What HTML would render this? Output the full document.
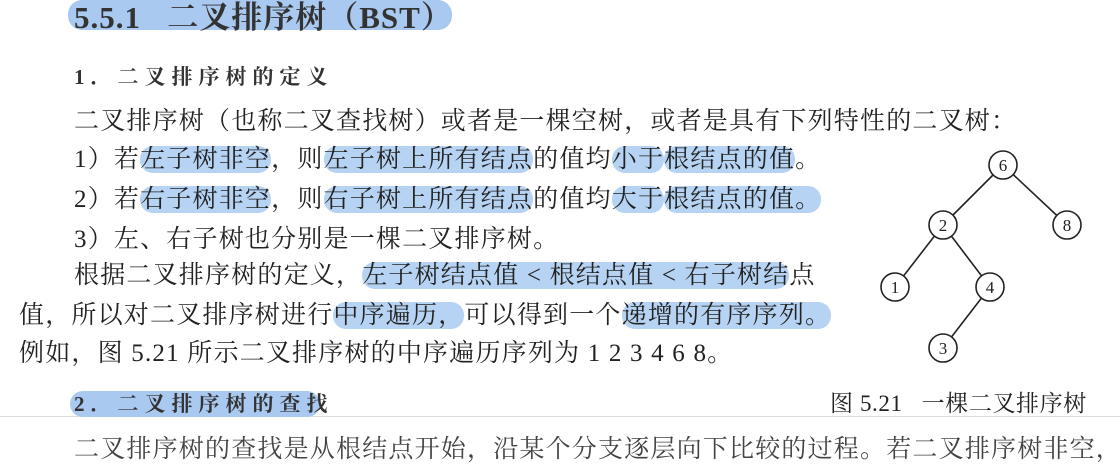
<!DOCTYPE html>
<html><head><meta charset="utf-8"><style>
body{margin:0;width:1120px;height:468px;background:#fff;position:relative;overflow:hidden;font-family:"Liberation Serif","Noto Serif CJK SC",serif;color:#222;}
.l{position:absolute;white-space:nowrap;font-size:25px;line-height:30px;letter-spacing:1.2px;}
.h{background:#b6d3f3;border-radius:13px;}
.hl{position:absolute;background:#a9c9f0;border-radius:14px;}
.t{font-weight:bold;font-size:31px;color:#333;letter-spacing:1px;}
.s{font-weight:bold;font-size:21px;color:#333;letter-spacing:6px;}
</style></head><body>
<div class="hl" style="left:68px;top:0;width:384px;height:30px;"></div>
<div class="l t" style="left:74px;top:3px;">5.5.1&nbsp;&nbsp;&nbsp;二叉排序树（BST）</div>
<div class="l s" style="left:74px;top:62px;">1．二叉排序树的定义</div>
<div class="l" style="left:74px;top:107px;">二叉排序树（也称二叉查找树）或者是一棵空树，或者是具有下列特性的二叉树：</div>
<div class="l" style="left:74px;top:145px;">1）若<span class="h">左子树非空</span>，则<span class="h">左子树上所有结点</span>的值均<span class="h">小于</span><span class="h">根结点的值</span>。</div>
<div class="l" style="left:74px;top:185px;">2）若<span class="h">右子树非空</span>，则<span class="h">右子树上所有结点</span>的值均<span class="h">大于</span><span class="h">根结点的值。</span></div>
<div class="l" style="left:74px;top:225px;">3）左、右子树也分别是一棵二叉排序树。</div>
<div class="l" style="left:74px;top:261px;">根据二叉排序树的定义，<span class="h">左子树结点值 &lt; 根结点值 &lt; 右子树结</span>点</div>
<div class="l" style="left:19px;top:301px;">值，所以对二叉排序树进行<span class="h">中序遍历，</span>可以得到一个<span class="h">递增的有序序列。</span></div>
<div class="l" style="left:19px;top:339px;">例如，图 5.21 所示二叉排序树的中序遍历序列为 1 2 3 4 6 8。</div>
<div style="position:absolute;left:0;top:416px;width:1120px;height:1px;background:#ddd;"></div>
<div class="hl" style="left:70px;top:391px;width:250px;height:26px;"></div>
<div class="l s" style="left:74px;top:389px;">2．二叉排序树的查找</div>
<div class="l" style="left:830px;top:389px;font-size:23px;letter-spacing:0.6px;">图 5.21&nbsp;&nbsp;&nbsp;一棵二叉排序树</div>
<div class="l" style="left:74px;top:435px;color:#444;">二叉排序树的查找是从根结点开始，沿某个分支逐层向下比较的过程。若二叉排序树非空，</div>
<svg style="position:absolute;left:0;top:0" width="1120" height="468">
<g stroke="#222" stroke-width="1.6" fill="none">
<line x1="1003" y1="165" x2="943" y2="225"/><line x1="1003" y1="165" x2="1067" y2="225"/>
<line x1="943" y1="225" x2="895" y2="287"/><line x1="943" y1="225" x2="990" y2="287"/>
<line x1="990" y1="287" x2="943" y2="348"/>
</g>
<g stroke="#222" stroke-width="1.6" fill="#fff">
<circle cx="1003" cy="165" r="14"/><circle cx="943" cy="225" r="14"/><circle cx="1067" cy="225" r="14"/>
<circle cx="895" cy="287" r="14"/><circle cx="990" cy="287" r="14"/><circle cx="943" cy="348" r="14"/>
</g>
<g font-family="Liberation Serif,serif" font-size="17" text-anchor="middle" fill="#222">
<text x="1003" y="171">6</text><text x="943" y="231">2</text><text x="1067" y="231">8</text>
<text x="895" y="293">1</text><text x="990" y="293">4</text><text x="943" y="354">3</text>
</g></svg>
</body></html>
